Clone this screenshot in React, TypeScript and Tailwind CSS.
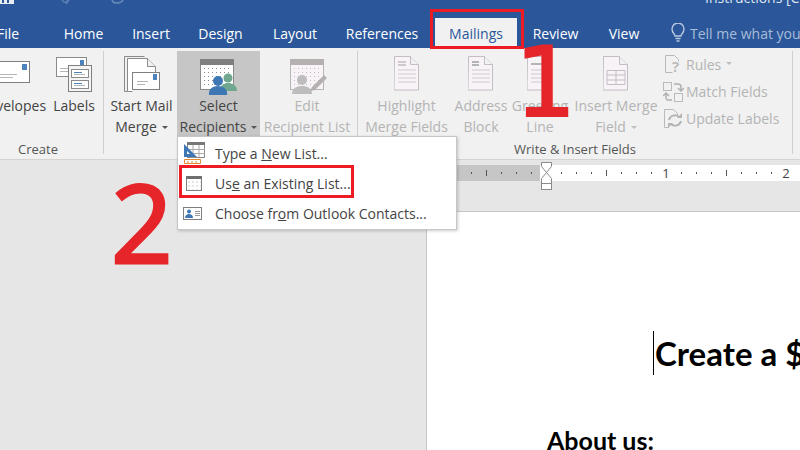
import type { ReactNode } from 'react'

const TABS = [
  { name: 'Home', width: 'w-[69px]' },
  { name: 'Insert', width: 'w-[66px]' },
  { name: 'Design', width: 'w-[73px]' },
  { name: 'Layout', width: 'w-[76px]' },
  { name: 'References', width: 'w-[98px]' },
]

function Dots({ x, y, cols, rows, color }: { x: number; y: number; cols: number; rows: number; color: string }) {
  const dots = []
  for (let r = 0; r < rows; r++) {
    for (let c = 0; c < cols; c++) {
      dots.push(<rect key={`${r}-${c}`} x={x + c * 4} y={y + r * 4} width="1" height="1" fill={color} />)
    }
  }
  return <>{dots}</>
}

function EnvelopeIcon() {
  return (
    <svg width="36" height="22" viewBox="0 0 36 22" fill="none">
      <rect x="0.5" y="0.5" width="34" height="21" fill="#fff" stroke="#7f7f7f" />
      <rect x="27" y="3" width="5" height="6" fill="#4d82bc" />
      <path d="M4 13.5h18M4 16.5h14" stroke="#b5b5b5" />
    </svg>
  )
}

function LabelsIcon() {
  return (
    <svg width="36" height="36" viewBox="0 0 36 36" fill="none">
      <rect x="0.5" y="1.5" width="30" height="19" fill="#fff" stroke="#8a8a8a" />
      <rect x="24" y="4" width="4" height="5" fill="#4d82bc" />
      <path d="M4 12.5h8M4 15.5h8" stroke="#b5b5b5" />
      <rect x="12.5" y="9.5" width="23" height="26" fill="#f4f4f4" stroke="#7f7f7f" />
      <rect x="15.5" y="13.5" width="17" height="8" fill="#fff" stroke="#8a8a8a" />
      <rect x="15.5" y="24.5" width="17" height="8" fill="#fff" stroke="#8a8a8a" />
      <path d="M18 16.5h8M18 27.5h8" stroke="#4d82bc" />
      <path d="M18 18.5h11M18 29.5h11" stroke="#b5b5b5" />
    </svg>
  )
}

function StartMailIcon() {
  return (
    <svg width="36" height="37" viewBox="0 0 36 37" fill="none">
      <path d="M5.5 35.5h-5v-35h20" stroke="#8a8a8a" />
      <path d="M8.5 35.5h-5v-33h20l8 8v6" fill="#fff" stroke="#8a8a8a" />
      <path d="M23.5 2.5v8h8" fill="#f1f1f1" stroke="#8a8a8a" />
      <rect x="8.5" y="16.5" width="27" height="17" fill="#fff" stroke="#7f7f7f" />
      <rect x="29" y="18" width="4" height="6" fill="#4d82bc" />
      <path d="M13 25.5h11M13 28.5h8" stroke="#b5b5b5" />
    </svg>
  )
}

function SelectIcon() {
  return (
    <svg width="38" height="36" viewBox="0 0 38 36" fill="none">
      <rect x="0.5" y="0.5" width="33" height="30" fill="#fff" stroke="#8a8a8a" />
      <rect x="0" y="0" width="34" height="6" fill="#7f7f7f" />
      <Dots x={4} y={9} cols={7} rows={5} color="#8c8c8c" />
      <circle cx="28" cy="19" r="4.5" fill="#6fa88f" />
      <path d="M20 32c0-6 4-8 8-8s9 2 9 8v0h-17z" fill="#6fa88f" />
      <circle cx="18" cy="22" r="5" fill="#3f77b5" />
      <path d="M9 36c-1-6 4-9 9-9s10 3 9 9z" fill="#3f77b5" />
    </svg>
  )
}

function EditIcon() {
  return (
    <svg width="40" height="36" viewBox="0 0 40 36" fill="none">
      <rect x="3.5" y="0.5" width="33" height="30" fill="#f7f3f7" stroke="#b8b4b4" />
      <rect x="3" y="0" width="34" height="6" fill="#b5b1b1" />
      <Dots x={7} y={9} cols={7} rows={5} color="#c4bcc4" />
      <circle cx="15" cy="21" r="5" fill="#bdbdbd" />
      <path d="M5 35c0-6 5-8 10-8s10 2 10 8z" fill="#bdbdbd" />
      <path d="M25 28l12-12 3 3-12 12-5 1z" fill="#b5b1b1" />
    </svg>
  )
}

function PageIcon({ children }: { children: ReactNode }) {
  return (
    <svg width="26" height="35" viewBox="0 0 26 35" fill="none">
      <path d="M0.5 0.5h16l8 8v25.5h-24.5z" fill="#f7f3f7" stroke="#c4bec4" />
      <path d="M16.5 0.5v8h8" fill="#f1f1f1" stroke="#c4bec4" />
      {children}
    </svg>
  )
}

function RuleIcon() {
  return (
    <svg width="20" height="19" viewBox="0 0 20 19" fill="none">
      <path d="M2.5 0.5h9l4 4v2M2.5 0.5v17h7" stroke="#bcb8bc" />
      <text x="9" y="17" fontSize="15" fontWeight="700" fill="#bdbdbd" fontFamily="Open Sans, sans-serif">?</text>
    </svg>
  )
}

function MatchIcon() {
  return (
    <svg width="21" height="20" viewBox="0 0 21 20" fill="none">
      <rect x="0.5" y="0.5" width="8" height="8" stroke="#bcb8bc" />
      <rect x="11.5" y="11.5" width="8" height="8" stroke="#bcb8bc" />
      <path d="M11 2h4c2 0 3 1 3 3v3M15 6l3 3 3-3M9 18H5c-2 0-2-1-2-3v-3M0 14l3-3 3 3" stroke="#b0b0b0" strokeWidth="1.5" />
    </svg>
  )
}

function UpdateIcon() {
  return (
    <svg width="20" height="19" viewBox="0 0 20 19" fill="none">
      <path d="M6 18.5H1.5V0.5h9l4 4v2" stroke="#bcb8bc" />
      <path d="M6 11a6 6 0 0 1 10-3M18 12a6 6 0 0 1-10 3" stroke="#b5b5b5" strokeWidth="2" />
      <path d="M14 9h5V4zM10 14H5v5z" fill="#b5b5b5" />
    </svg>
  )
}

function Caret({ light }: { light?: boolean }) {
  return (
    <span
      className={`inline-block ml-[5px] mb-[3px] border-x-[3px] border-t-[3px] border-x-transparent ${light ? 'border-t-[#c0c0c0]' : 'border-t-[#555]'}`}
    />
  )
}

type BigButtonProps = {
  icon: ReactNode
  lines: ReactNode[]
  width: string
  disabled?: boolean
  active?: boolean
}

function BigButton({ icon, lines, width, disabled, active }: BigButtonProps) {
  return (
    <div
      className={`${width} h-[85px] shrink-0 flex flex-col items-center ${disabled ? 'text-[#b4b4b4]' : 'text-[#444]'} ${active ? 'bg-[#c6c6c6]' : ''}`}
    >
      <div className="h-[44px] shrink-0 pt-[5px] flex items-start justify-center">{icon}</div>
      {lines.map((line, i) => (
        <div key={i} className="leading-[21px] shrink-0 whitespace-nowrap">{line}</div>
      ))}
    </div>
  )
}

function SmallButton({ icon, children }: { icon: ReactNode; children: ReactNode }) {
  return (
    <div className="h-[27px] flex items-center text-[#b4b4b4] whitespace-nowrap">
      <div className="w-[23px] shrink-0">{icon}</div>
      {children}
    </div>
  )
}

function Group({ width, label, children }: { width: string; label: string; children: ReactNode }) {
  return (
    <div className={`${width} shrink-0 h-full flex flex-col`}>
      <div className="h-[88px] flex">{children}</div>
      <div className="mt-[1px] leading-[18px] text-[13px] text-[#555] text-center whitespace-nowrap">{label}</div>
    </div>
  )
}

function GroupLine() {
  return <div className="w-px h-[103px] shrink-0 bg-[#d0d0d0]" />
}

function MenuItem({ icon, children }: { icon: ReactNode; children: ReactNode }) {
  return (
    <div className="h-[30px] flex items-center text-[#444] whitespace-nowrap">
      <div className="w-[36px] pl-[5px] shrink-0 flex">{icon}</div>
      {children}
    </div>
  )
}

export default function App() {
  return (
    <div className="relative w-[800px] h-[450px] overflow-hidden bg-[#e6e6e6] text-[14px] font-['Open_Sans',sans-serif]">
      {/* title + tabs */}
      <div className="h-[48px] bg-[#2b579a] text-white">
        <div className="h-[18px] overflow-hidden relative">
          <svg className="absolute left-0 top-0" width="130" height="5" viewBox="0 0 130 5" fill="none">
            <rect x="0" y="0" width="14" height="4" fill="#e8ecf3" />
            <path d="M3 0v3M8 0v3" stroke="#2b579a" strokeWidth="2" />
            <path d="M62 0c2 3 4 3 6 0M69 0l-3 4" stroke="#5b7fb5" strokeWidth="1.5" />
            <path d="M112 0c1 4 9 4 11 0" stroke="#6b8cbd" strokeWidth="1.5" />
          </svg>
          <div className="flex justify-end pr-[1px]">
            <span className="mt-[-13px] w-[94px] whitespace-nowrap overflow-hidden text-[#dfe6f1]">Instructions [C</span>
          </div>
        </div>
        <div className="h-[30px] flex items-center ml-[-3px] w-[803px] overflow-hidden">
          <span className="w-[52px] shrink-0">File</span>
          {TABS.map((t) => (
            <span key={t.name} className={`${t.width} shrink-0 text-center`}>{t.name}</span>
          ))}
          <div className="ml-[4px] h-[30px] w-[82px] shrink-0 bg-[#f1f1f1] text-[#2b579a] flex items-center justify-center">Mailings</div>
          <span className="w-[77px] shrink-0 text-center">Review</span>
          <span className="w-[60px] shrink-0 text-center">View</span>
          <svg className="ml-[16px] shrink-0" width="16" height="20" viewBox="0 0 16 20" fill="none" stroke="#b9c8de" strokeWidth="1.4">
            <path d="M5 13c0-2-3-3-3-7a6 6 0 0 1 12 0c0 4-3 5-3 7z" />
            <path d="M5.5 15.5h5M6.5 18h3" />
          </svg>
          <span className="ml-[4px] whitespace-nowrap text-[#a9bcd8]">Tell me what you want to do</span>
        </div>
      </div>

      {/* ribbon */}
      <div className="h-[112px] bg-[#f1f1f1] border-b border-[#d4d4d4] pt-[3px] flex ml-[-27px] w-[827px]">
        <Group width="w-[130px]" label="Create">
          <div className="w-[4px]" />
          <BigButton width="w-[72px]" icon={<div className="pt-[5px]"><EnvelopeIcon /></div>} lines={['Envelopes']} />
          <BigButton width="w-[50px]" icon={<LabelsIcon />} lines={['Labels']} />
        </Group>
        <GroupLine />
        <Group width="w-[253px]" label="">
          <div className="w-[2px]" />
          <BigButton width="w-[71px]" icon={<StartMailIcon />} lines={['Start Mail', <>Merge<Caret /></>]} />
          <BigButton width="w-[83px]" active icon={<div className="pt-[3px]"><SelectIcon /></div>} lines={['Select', <>Recipients<Caret /></>]} />
          <div className="w-[2px]" />
          <BigButton width="w-[90px]" disabled icon={<div className="pt-[3px]"><EditIcon /></div>} lines={['Edit', 'Recipient List']} />
        </Group>
        <GroupLine />
        <Group width="w-[434px]" label="Write & Insert Fields">
          <div className="w-[4px]" />
          <BigButton
            width="w-[89px]"
            disabled
            icon={
              <PageIcon>
                <path d="M4 6h8M4 9h8" stroke="#cfc9cf" strokeWidth="2" />
                <path d="M4 14h18M4 18h18M4 22h18M4 26h18" stroke="#cfc9cf" />
              </PageIcon>
            }
            lines={['Highlight', 'Merge Fields']}
          />
          <div className="w-[2px]" />
          <BigButton
            width="w-[56px]"
            disabled
            icon={
              <PageIcon>
                <path d="M4 6h7M4 9h7" stroke="#b5b5b5" strokeWidth="2" />
                <path d="M4 14h18M4 18h18M4 22h18M4 26h18" stroke="#cfc9cf" />
              </PageIcon>
            }
            lines={['Address', 'Block']}
          />
          <div className="w-px" />
          <BigButton
            width="w-[60px]"
            disabled
            icon={
              <PageIcon>
                <path d="M4 8h12" stroke="#b5b5b5" strokeWidth="2" />
                <path d="M4 14h18M4 18h18M4 22h18M4 26h18" stroke="#cfc9cf" />
              </PageIcon>
            }
            lines={['Greeting', 'Line']}
          />
          <div className="w-[2px]" />
          <BigButton
            width="w-[88px]"
            disabled
            icon={
              <PageIcon>
                <path d="M4 14.5h18v14h-18zM4 19h18M4 24h18M13 14.5v14" stroke="#c4bec4" />
              </PageIcon>
            }
            lines={['Insert Merge', <>Field<Caret light /></>]}
          />
          <div className="w-[3px]" />
          <div>
            <SmallButton icon={<RuleIcon />}>Rules<Caret light /></SmallButton>
            <SmallButton icon={<MatchIcon />}>Match Fields</SmallButton>
            <SmallButton icon={<UpdateIcon />}>Update Labels</SmallButton>
          </div>
        </Group>
        <GroupLine />
      </div>

      {/* document area */}
      <div className="flex h-[290px]">
        <div className="w-[427px] shrink-0 border-r border-[#c6c6c6]" />
        <div className="flex-1 pt-[5px]">
          <div className="h-[16px] flex">
            <div className="w-[113px] bg-[#c6c6c6]" />
            <div className="flex-1 bg-white" />
          </div>
          <div className="mt-[30px] h-[240px] bg-white border-t border-[#c6c6c6] text-black font-['Lato',sans-serif] font-bold">
            <div className="pt-[119px] pl-[226px] flex">
              <div className="text-[33px] leading-[44px] border-l border-black pl-px whitespace-nowrap">Create a $</div>
            </div>
            <div className="mt-[50px] pl-[120px] text-[25px] leading-[30px] whitespace-nowrap">About us:</div>
          </div>
        </div>
      </div>

      {/* ruler ticks + indent marker */}
      <svg className="absolute left-[457px] top-[162px]" width="343" height="29" viewBox="457 162 343 29" fill="none">
        {[471, 501, 516, 531, 561, 576, 591, 621, 636, 651, 681, 696, 711, 741, 756, 771].map((x) => (
          <rect key={x} x={x} y="172" width="1" height="2" fill="#555" />
        ))}
        {[486, 606, 726].map((x) => (
          <rect key={x} x={x} y="170" width="1" height="6" fill="#555" />
        ))}
        <text x="666" y="178" fontSize="13" fill="#444" textAnchor="middle" fontFamily="Open Sans, sans-serif">1</text>
        <text x="786" y="178" fontSize="13" fill="#444" textAnchor="middle" fontFamily="Open Sans, sans-serif">2</text>
        <path d="M541.5 162.5h10v4l-5 6 5 6v5h-10v-5l5-6-5-6z" fill="#fff" stroke="#8a8a8a" />
        <rect x="541.5" y="183.5" width="10" height="6" fill="#fff" stroke="#8a8a8a" />
      </svg>

      {/* Select Recipients menu */}
      <div className="absolute left-[177px] top-[136px] w-[280px] h-[94px] bg-white border border-[#c6c6c6] shadow-[1px_1px_3px_rgba(0,0,0,0.2)] pt-px">
        <MenuItem
          icon={
            <svg width="22" height="22" viewBox="0 0 22 22" fill="none">
              <rect x="4.5" y="0.5" width="17" height="15" fill="#fff" stroke="#8a8a8a" />
              <rect x="4" y="0" width="18" height="3" fill="#777" />
              <path d="M10 3v12M16 3v12M4 7.5h18M4 11.5h18" stroke="#aaa" />
              <path d="M1 2v13h13z" fill="#3f77b5" />
              <path d="M4 9v3h3z" fill="#fff" />
              <path d="M1.5 17.5h16v4h-16z" fill="#fff" stroke="#e2882f" />
              <path d="M5 19v2M9 19v2M13 19v2" stroke="#e2882f" />
            </svg>
          }
        >
          <span className="ml-px">Type a <u>N</u>ew List...</span>
        </MenuItem>
        <MenuItem
          icon={
            <svg width="16" height="15" viewBox="0 0 16 15" fill="none" className="ml-[3px]">
              <rect x="0.5" y="0.5" width="15" height="14" fill="#fff" stroke="#7f7f7f" />
              <rect x="0" y="0" width="16" height="3" fill="#6f6f6f" />
              <Dots x={2.5} y={5.5} cols={4} rows={3} color="#999" />
            </svg>
          }
        >
          <span className="ml-px">Us<u>e</u> an Existing List...</span>
        </MenuItem>
        <MenuItem
          icon={
            <svg width="19" height="13" viewBox="0 0 19 13" fill="none">
              <rect x="0.5" y="0.5" width="18" height="12" fill="#fff" stroke="#7f7f7f" />
              <circle cx="6" cy="4.5" r="2" fill="#3f77b5" />
              <path d="M2 11c0-3 2-4 4-4s4 1 4 4z" fill="#3f77b5" />
              <path d="M12 4.5h5M12 6.5h5M12 8.5h5" stroke="#999" />
            </svg>
          }
        >
          <span className="ml-px">Choose fr<u>o</u>m Outlook Contacts...</span>
        </MenuItem>
      </div>

      {/* red annotations */}
      <div className="absolute left-[430px] top-[9px] w-[94px] h-[40px] border-[3px] border-[#ed1c24]" />
      <div className="absolute left-[179px] top-[165px] w-[175px] h-[33px] border-[3px] border-[#ed1c24]" />
      <div className="absolute left-[515px] top-[27px] text-[96px] leading-[112px] text-[#e5252a] [-webkit-text-stroke:2px_#e5252a] font-['DejaVu_Sans',sans-serif]">1</div>
      <div className="absolute left-[111px] top-[160px] text-[108px] leading-[124px] text-[#e5252a] [-webkit-text-stroke:3px_#e5252a] font-['Open_Sans',sans-serif]">2</div>
    </div>
  )
}
